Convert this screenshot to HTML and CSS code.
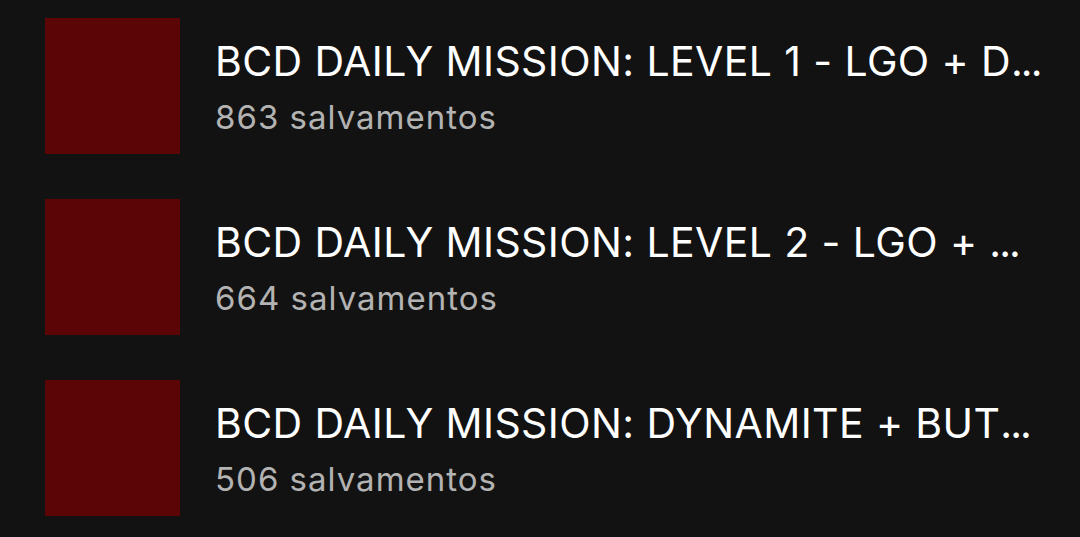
FILE: index.html
```html
<!DOCTYPE html>
<html lang="pt">
<head>
    <meta charset="UTF-8">
    <meta name="viewport" content="width=device-width, initial-scale=1.0">
    <title>Playlists salvas</title>
    <link rel="stylesheet" href="styles.css">
</head>
<body>
    <ul class="list">
        <li class="item">
            <div class="cover"></div>
            <div class="info">
                <div class="title">BCD DAILY MISSION: LEVEL 1 - LGO + D<span class="more">...</span></div>
                <div class="saves">863 salvamentos</div>
            </div>
        </li>
        <li class="item">
            <div class="cover"></div>
            <div class="info">
                <div class="title">BCD DAILY MISSION: LEVEL 2 - LGO + <span class="more">...</span></div>
                <div class="saves">664 salvamentos</div>
            </div>
        </li>
        <li class="item">
            <div class="cover"></div>
            <div class="info">
                <div class="title">BCD DAILY MISSION: DYNAMITE + BUT<span class="more">...</span></div>
                <div class="saves">506 salvamentos</div>
            </div>
        </li>
    </ul>
</body>
</html>
```

FILE: styles.css
```css
body {
    margin: 0;
    background-color: #121212;
    font-family: Inter, "Noto Sans", sans-serif;
    overflow: hidden;
}

.list {
    list-style: none;
    margin: 0;
    padding: 18px 30px 0 45px;
}

.item {
    display: flex;
    align-items: center;
    gap: 35px;
    height: 136px;
    margin-bottom: 45px;
}

.cover {
    flex: none;
    width: 135px;
    height: 136px;
    background-color: #5c0507;
}

.info {
    min-width: 0;
    flex: 1;
}

.title {
    color: #fff;
    font-size: 41px;
    line-height: 50px;
    letter-spacing: 0.4px;
    white-space: nowrap;
    margin-top: 2px;
}

.more {
    letter-spacing: -2px;
}

.saves {
    color: #b3b3b3;
    font-size: 33px;
    line-height: 42px;
    letter-spacing: 1px;
    margin-top: 10px;
}
```
